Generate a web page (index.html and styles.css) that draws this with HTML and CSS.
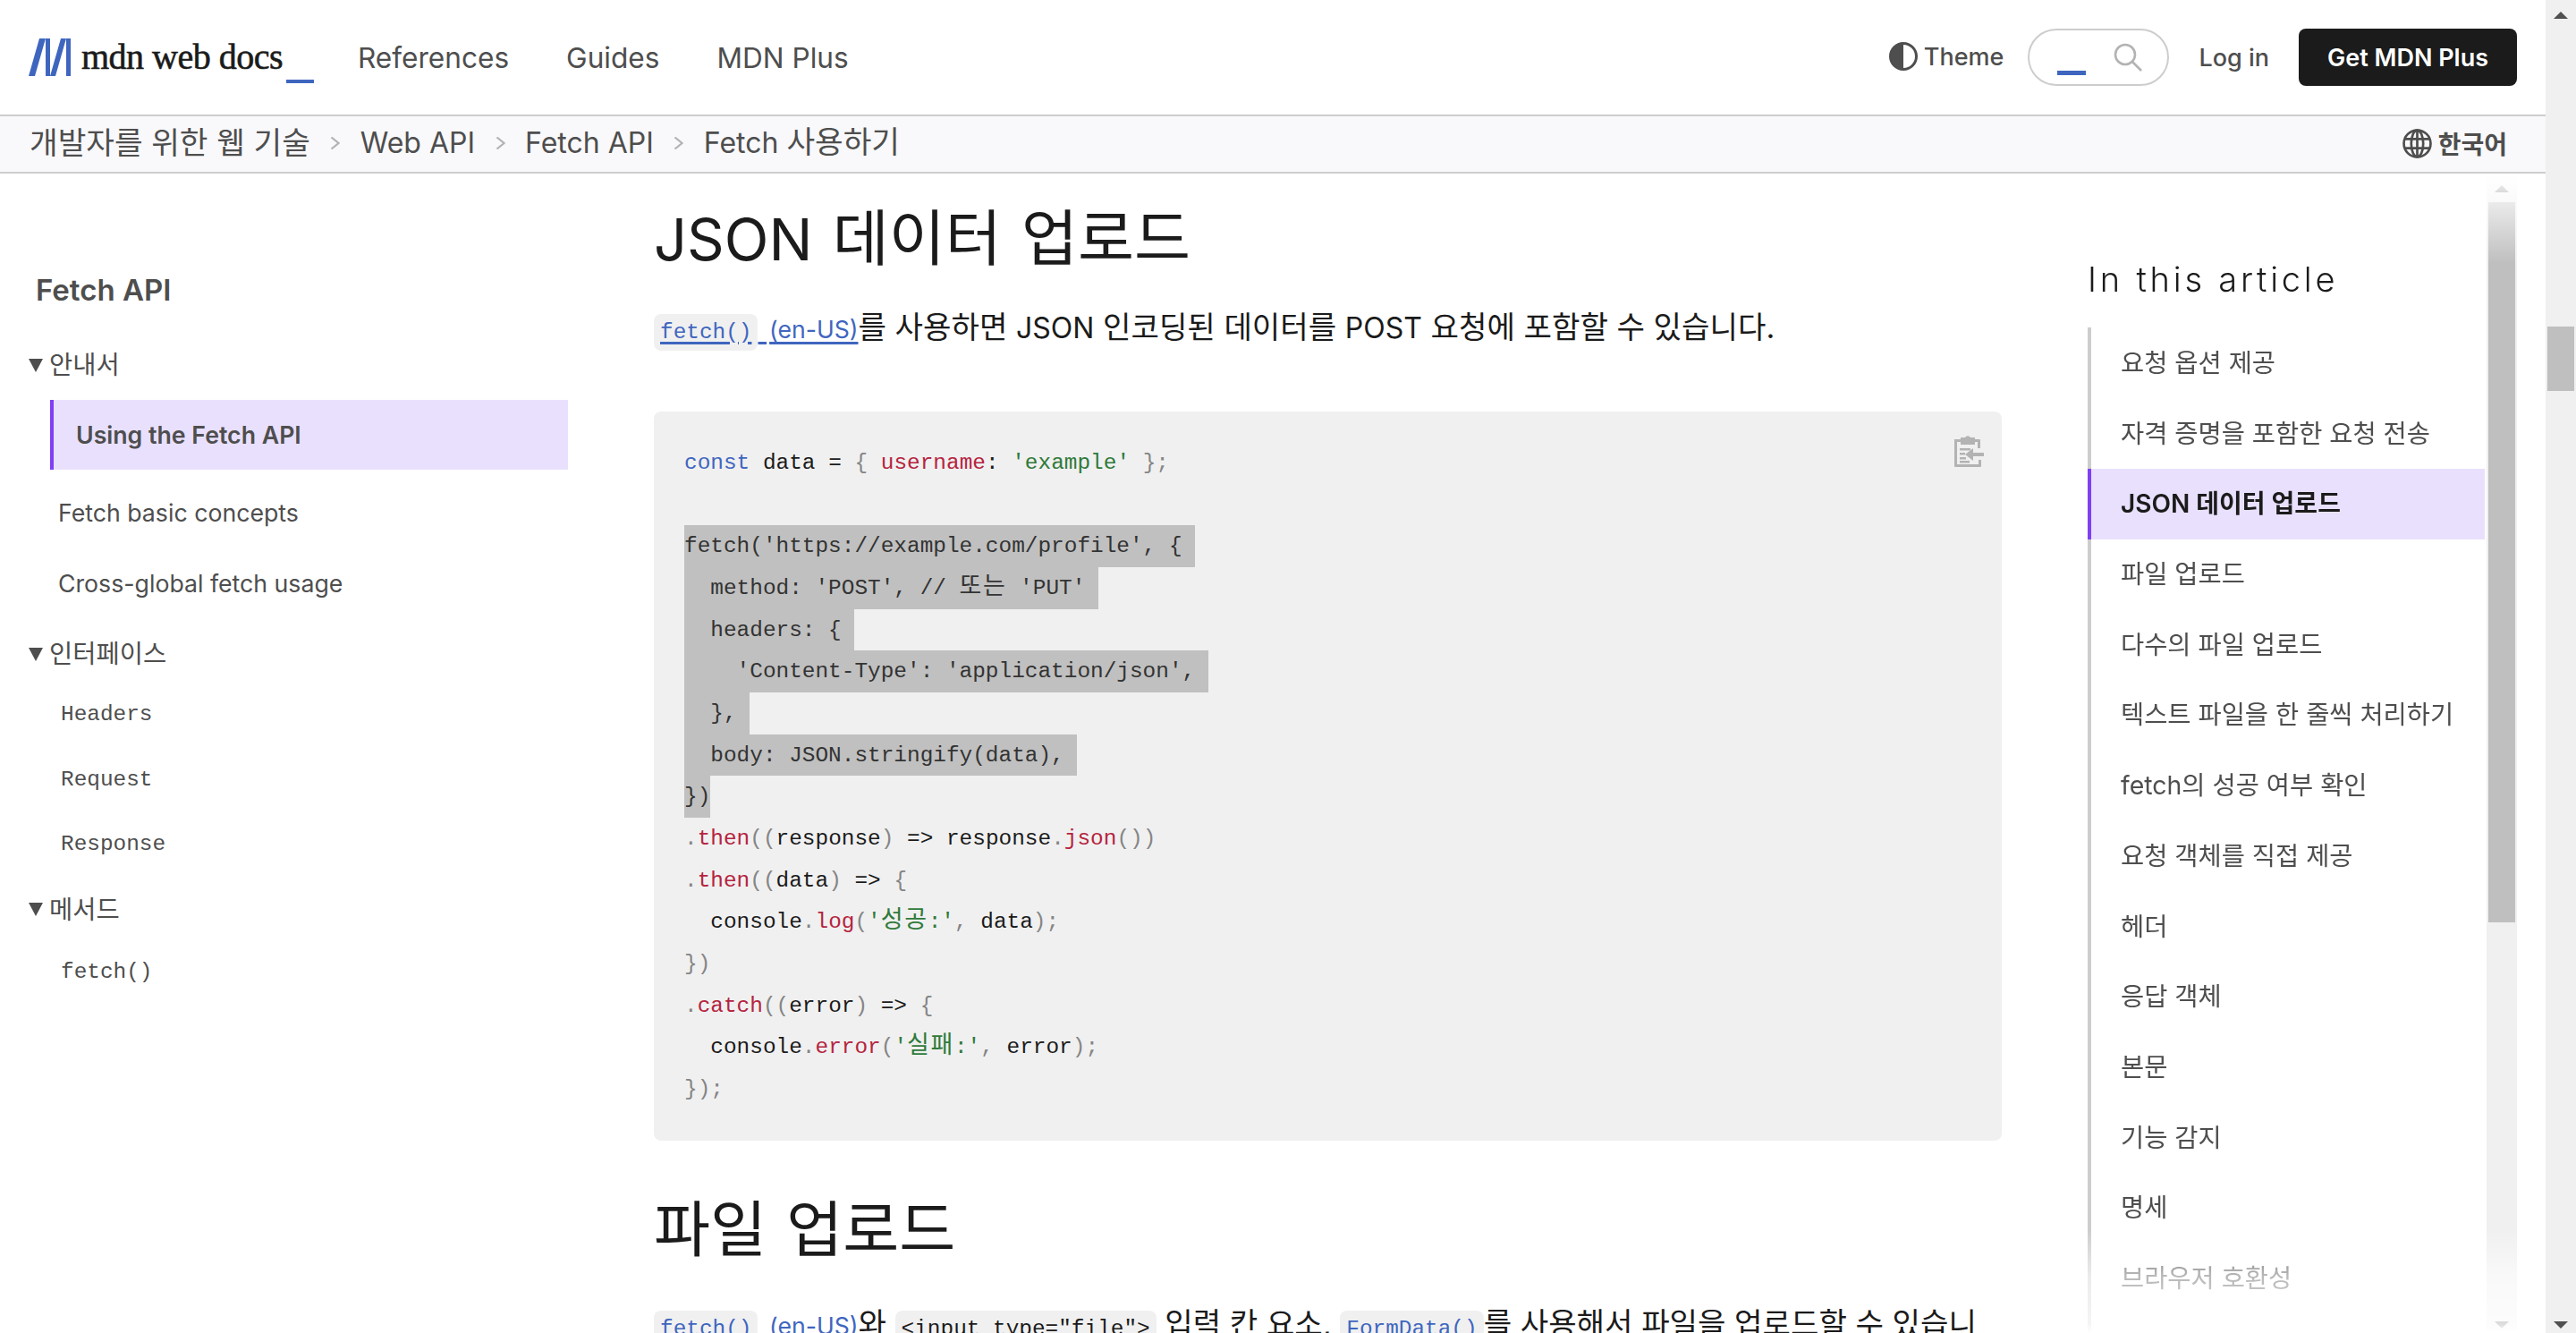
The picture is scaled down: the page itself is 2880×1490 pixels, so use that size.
FILE: index.html
```html
<!DOCTYPE html>
<html lang="ko">
<head>
<meta charset="utf-8">
<title>Fetch 사용하기 - Web API | MDN</title>
<link rel="stylesheet" href="styles.css">
</head>
<body>
<div class="page">
  <div class="viewport">
    <header class="top">
      <a class="logo">
        <svg class="logo-mark" viewBox="0 0 47 42"><path d="M0 42h7L19 0h-7zM19 0h5v42h-5zM24 42h6L42 0h-6zM42 0h5v42h-5z"/></svg>
        <span class="logo-text">mdn web docs</span>
        <span class="logo-bar"></span>
      </a>
      <nav class="mainnav">
        <a>References</a><a>Guides</a><a>MDN Plus</a>
      </nav>
      <div class="tools">
        <button class="theme">
          <svg class="theme-ico" viewBox="0 0 32 32"><circle cx="16" cy="16" r="14.5" fill="none" stroke="#4e4e4e" stroke-width="3"/><path d="M16 1.5a14.5 14.5 0 0 0 0 29z" fill="#4e4e4e"/></svg>
          <span>Theme</span>
        </button>
        <div class="search">
          <span class="caret"></span>
          <svg class="search-ico" viewBox="0 0 32 32"><circle cx="13" cy="13" r="11" fill="none" stroke="#b3b3b3" stroke-width="2.6"/><path d="M21 21l10 10" stroke="#b3b3b3" stroke-width="2.6" fill="none"/></svg>
        </div>
        <a class="login">Log in</a>
        <a class="plus">Get MDN Plus</a>
      </div>
    </header>
    <div class="crumbs">
      <ol class="crumb-list">
        <li class="ko-crumb">개발자를 위한 웹 기술</li>
        <li class="sep"><svg viewBox="0 0 11 14"><path d="M1.500 0.500l8 6.500-8 6.500" fill="none" stroke="#b3b3b3" stroke-width="2.200"/></svg></li>
        <li>Web API</li>
        <li class="sep"><svg viewBox="0 0 11 14"><path d="M1.500 0.500l8 6.500-8 6.500" fill="none" stroke="#b3b3b3" stroke-width="2.200"/></svg></li>
        <li>Fetch API</li>
        <li class="sep"><svg viewBox="0 0 11 14"><path d="M1.500 0.500l8 6.500-8 6.500" fill="none" stroke="#b3b3b3" stroke-width="2.200"/></svg></li>
        <li>Fetch <span class="ko-crumb">사용하기</span></li>
      </ol>
      <div class="lang">
        <svg class="globe" viewBox="0 0 32 32" fill="none" stroke="#4e4e4e" stroke-width="2.6"><circle cx="16" cy="16" r="14.5"/><ellipse cx="16" cy="16" rx="6.5" ry="14.5"/><path d="M2 11h28M2 21h28M16 1.5v29"/></svg>
        <span>한국어</span>
      </div>
    </div>
    <main class="layout">
      <aside class="side">
        <h4 class="side-title">Fetch API</h4>
        <div class="group first-group"><span class="tri"></span>안내서</div>
        <a class="side-active">Using the Fetch API</a>
        <a class="side-link">Fetch basic concepts</a>
        <a class="side-link">Cross-global fetch usage</a>
        <div class="group"><span class="tri"></span>인터페이스</div>
        <ul class="api-list">
          <li>Headers</li><li>Request</li><li>Response</li>
        </ul>
        <div class="group method-group"><span class="tri"></span>메서드</div>
        <ul class="api-list method-list">
          <li>fetch()</li>
        </ul>
      </aside>
      <article class="content">
        <h2 class="h-first"><span class="lat">JSON</span> 데이터 업로드</h2>
        <p class="para"><a class="lnk"><code class="chip">fetch()</code> <span class="en">(en-US)</span></a>를 사용하면 <span class="lat">JSON</span> 인코딩된 데이터를 <span class="lat">POST</span> 요청에 포함할 수 있습니다.</p>
        <div class="codebox">
          <svg class="copy" viewBox="0 0 36 37"><path d="M3 6h7V4h5a3.500 3.500 0 0 1 6 0h5v2h5a1 1 0 0 1 1 1v9h-3V9h-3v3H10V9H6v25h24v-5h3v7a1 1 0 0 1-1 1H4a1 1 0 0 1-1-1z" fill="#b3b3b3"/><path d="M9 16h12v2.500H9zM9 21h6v2.500H9zM9 26h7v2.500H9zM9 30h11v2.500H9z" fill="#b3b3b3"/><path d="M36 21v4H24v5l-9-7 9-7v5z" fill="#b3b3b3"/></svg>
          <code class="code">
            <span class="ln"><i class="kw">const</i> data <i class="pn">=</i> <i class="pg">{</i> <i class="pr">username</i>: <i class="st">'example'</i> <i class="pg">};</i></span>
            <span class="ln"> </span>
            <span class="ln sel">fetch('https://example.com/profile', { </span>
            <span class="ln sel">  method: 'POST', // <b class="ko">또는</b> 'PUT' </span>
            <span class="ln sel">  headers: { </span>
            <span class="ln sel">    'Content-Type': 'application/json', </span>
            <span class="ln sel">  }, </span>
            <span class="ln sel">  body: JSON.stringify(data), </span>
            <span class="ln sel">})</span>
            <span class="ln"><i class="pg">.</i><i class="pr">then</i><i class="pg">((</i>response<i class="pg">)</i> =&gt; response<i class="pg">.</i><i class="pr">json</i><i class="pg">())</i></span>
            <span class="ln"><i class="pg">.</i><i class="pr">then</i><i class="pg">((</i>data<i class="pg">)</i> =&gt; <i class="pg">{</i></span>
            <span class="ln">  console<i class="pg">.</i><i class="pr">log</i><i class="pg">(</i><i class="st">'<b class="ko">성공</b>:'</i><i class="pg">,</i> data<i class="pg">);</i></span>
            <span class="ln"><i class="pg">})</i></span>
            <span class="ln"><i class="pg">.</i><i class="pr">catch</i><i class="pg">((</i>error<i class="pg">)</i> =&gt; <i class="pg">{</i></span>
            <span class="ln">  console<i class="pg">.</i><i class="pr">error</i><i class="pg">(</i><i class="st">'<b class="ko">실패</b>:'</i><i class="pg">,</i> error<i class="pg">);</i></span>
            <span class="ln"><i class="pg">});</i></span>
          </code>
        </div>
        <h2 class="h-second">파일 업로드</h2>
        <p class="para para-second"><a class="lnk"><code class="chip">fetch()</code> <span class="en">(en-US)</span></a>와 <code class="chip plain">&lt;input type="file"&gt;</code> 입력 칸 요소, <a class="lnk"><code class="chip">FormData()</code></a>를 사용해서 파일을 업로드할 수 있습니</p>
      </article>
      <aside class="toc">
        <div class="toc-body">
          <h2 class="toc-title">In this article</h2>
          <ul class="toc-list">
            <li>요청 옵션 제공</li>
            <li>자격 증명을 포함한 요청 전송</li>
            <li class="toc-active">JSON 데이터 업로드</li>
            <li>파일 업로드</li>
            <li>다수의 파일 업로드</li>
            <li>텍스트 파일을 한 줄씩 처리하기</li>
            <li>fetch의 성공 여부 확인</li>
            <li>요청 객체를 직접 제공</li>
            <li>헤더</li>
            <li>응답 객체</li>
            <li>본문</li>
            <li>기능 감지</li>
            <li>명세</li>
            <li>브라우저 호환성</li>
          </ul>
        </div>
        <div class="bar bar-toc">
          <span class="arrow up"></span>
          <span class="thumb"></span>
          <span class="arrow down"></span>
        </div>
      </aside>
    </main>
  </div>
  <div class="bar bar-page">
    <span class="arrow up"></span>
    <span class="thumb"></span>
    <span class="arrow down"></span>
  </div>
</div>
</body>
</html>
```
FILE: styles.css
```css
* { box-sizing: border-box; }
html, body { margin: 0; padding: 0; background: #fff; }
body {
  font-family: Inter, "Noto Sans CJK KR", sans-serif;
  color: #1b1b1b;
  width: 2880px;
  height: 1490px;
  overflow: hidden;
}
ul, ol { list-style: none; margin: 0; padding: 0; }
h2, h4, p { margin: 0; font-weight: 400; }
i, b { font-style: normal; font-weight: 400; }

.page { display: flex; height: 1490px; }
.viewport { width: 2846px; display: flex; flex-direction: column; height: 1490px; }

/* top bar */
.top {
  height: 130px;
  flex: none;
  border-bottom: 2px solid #cdcdcd;
  display: flex;
  align-items: center;
  padding: 0 32px;
}
.logo { display: flex; align-items: center; width: 319px; position: relative; height: 64px; }
.logo-mark { width: 47px; height: 42px; fill: #3f66bf; flex: none; }
.logo-text {
  font-family: "Liberation Serif", serif;
  font-size: 40px;
  letter-spacing: -0.5px;
  -webkit-text-stroke: 0.6px #1b1b1b;
  margin-left: 12px;
  white-space: nowrap;
  line-height: 40px;
}
.logo-bar { position: absolute; left: 288px; top: 57px; width: 31px; height: 4px; background: #3f66bf; }
.mainnav { display: flex; gap: 64px; margin-left: 49px; font-size: 31.600px; color: #4e4e4e; }
.tools { margin-left: auto; display: flex; align-items: center; height: 64px; }
.theme {
  display: flex; align-items: center; gap: 7px;
  background: none; border: 0; padding: 0; margin: 0;
  font: 500 27px Inter, sans-serif; color: #4e4e4e;
  position: relative; top: -1px;
}
.theme-ico { width: 32px; height: 32px; }
.search {
  width: 158px; height: 64px; margin-left: 27px;
  border: 2px solid #cdcdcd; border-radius: 32px;
  position: relative;
}
.caret { position: absolute; left: 31px; top: 45px; width: 32px; height: 5px; background: #3f66bf; }
.search-ico { position: absolute; left: 94px; top: 14px; width: 32px; height: 32px; }
.login { margin-left: 33px; font-size: 27px; font-weight: 500; color: #4e4e4e; }
.plus {
  margin-left: 33px; width: 244px; height: 64px; border-radius: 8px;
  background: #1b1b1b; color: #fff; font-size: 27px; font-weight: 600;
  display: flex; align-items: center; justify-content: center;
}

/* breadcrumbs */
.crumbs {
  height: 64px; flex: none;
  background: #f9f9fb;
  border-bottom: 2px solid #cdcdcd;
  display: flex; align-items: center;
  padding: 0 43px 2px 33px;
  color: #4e4e4e;
}
.crumb-list { display: flex; align-items: center; font-size: 32px; white-space: nowrap; line-height: 44px; }
.ko-crumb { font-size: 34.400px; line-height: 1; }
.sep { width: 11px; height: 14px; margin: 0 22.500px; display: flex; }
.sep svg { width: 11px; height: 14px; }
.lang { margin-left: auto; display: flex; align-items: center; gap: 7px; font-size: 28px; font-weight: 700; }
.globe { width: 33px; height: 33px; }

/* layout */
.layout { display: flex; flex: 1; min-height: 0; overflow: hidden; }

/* sidebar */
.side { width: 731px; flex: none; padding-top: 100px; color: #4e4e4e; font-size: 26.700px; }
.side-title { font-size: 33px; font-weight: 600; line-height: 60px; height: 60px; margin: 0 0 0 40px; }
.group { display: flex; align-items: center; height: 40px; line-height: 40px; padding-left: 32px; margin-top: 19px; font-size: 28.500px; }
.first-group { margin-top: 34px; }
.tri {
  width: 0; height: 0; margin-right: 7px;
  border-left: 8.500px solid transparent;
  border-right: 8.500px solid transparent;
  border-top: 15px solid #4e4e4e;
}
.side-active {
  display: block;
  width: 579px; height: 78px; line-height: 78px;
  margin: 19px 0 9px 56px;
  padding-left: 25px;
  background: #e9e0fd;
  border-left: 4px solid #7f3ff5;
  font-weight: 600;
}
.side-link { display: block; height: 79px; line-height: 79px; padding-left: 65px; }
.api-list { padding-left: 68px; margin-top: 12px; font-family: "Liberation Mono", monospace; font-size: 24.400px; }
.api-list li { height: 72.500px; line-height: 72.500px; }
.method-group { margin-top: 16px; }
.method-list { margin-top: 14px; }

/* article */
.content { width: 1507px; flex: none; }
h2 { font-size: 68.500px; line-height: 80px; word-spacing: 3px; }
.lat { font-size: 65px; }
.para .lat { font-size: 32px; }
.h-first { margin: 33px 0 0 0; }
.h-second { margin: 60px 0 0 0; }
.para { font-size: 34.200px; line-height: 48px; white-space: nowrap; margin-top: 34px; }
.para-second { margin-top: 41px; }
.lnk { color: #3f66bf; text-decoration: underline; text-underline-offset: 4px; }
.en { font-size: 26.600px; margin-left: 3px; }
.chip {
  font-family: "Liberation Mono", monospace;
  font-size: 24.400px;
  background: #f0f0f0;
  border-radius: 8px;
  padding: 7px 7px;
}
.plain { color: #1b1b1b; }
.codebox {
  position: relative;
  margin-top: 64px;
  height: 815px;
  background: #f0f0f0;
  border-radius: 8px;
  padding: 34px 34px;
}
.copy { position: absolute; right: 20px; top: 25px; width: 36px; height: 37px; }
.code {
  display: block;
  font-family: "Liberation Mono", "Noto Sans CJK KR", monospace;
  font-size: 24.420px;
  line-height: 46.670px;
  color: #1b1b1b;
}
.ln { display: block; width: fit-content; height: 46.670px; padding-top: 1px; white-space: pre; }
.sel { background: #c0c0c0; color: #333; }
.kw { color: #3f66bf; }
.pr { color: #b5243f; }
.st { color: #2f7a3a; }
.pg { color: #858585; }
.pn { color: #1b1b1b; }
.ko { font-family: "Noto Sans CJK KR", sans-serif; font-size: 27px; letter-spacing: 1.600px; line-height: 1; }

/* toc */
.toc {
  flex: 1; min-width: 0;
  margin-left: 96px;
  display: flex;
  padding-right: 32px;
  -webkit-mask-image: linear-gradient(to bottom, rgba(0,0,0,0) 0, #000 100px, #000 calc(100% - 115px), rgba(0,0,0,0.4) calc(100% - 64px), rgba(0,0,0,0.2) calc(100% - 10px), rgba(0,0,0,0) 100%);
  mask-image: linear-gradient(to bottom, rgba(0,0,0,0) 0, #000 100px, #000 calc(100% - 115px), rgba(0,0,0,0.4) calc(100% - 64px), rgba(0,0,0,0.2) calc(100% - 10px), rgba(0,0,0,0) 100%);
}
.toc-body { width: 446px; flex: none; padding-top: 94px; display: flex; flex-direction: column; }
.toc-title { font-size: 38px; font-weight: 300; line-height: 48px; letter-spacing: 3.800px; word-spacing: 0; white-space: nowrap; }
.toc-list { margin-top: 30px; border-left: 4px solid #cdcdcd; color: #4e4e4e; font-size: 28.450px; flex: 1; margin-right: 2px; padding-top: 1px; }
.toc-list li { height: 78.700px; line-height: 78.700px; padding-left: 33px; white-space: nowrap; }
.toc-list .toc-active {
  margin-left: -4px; padding-left: 33px;
  border-left: 4px solid #7f3ff5;
  background: #e9e0fd; color: #1b1b1b; font-weight: 600; font-size: 28px;
}

/* scrollbars */
.bar { width: 34px; flex: none; background: #f0f0f0; display: flex; flex-direction: column; align-items: center; position: relative; }
.thumb { width: 30px; background: #bfbfbf; display: block; }
.arrow { position: absolute; left: 9px; width: 0; height: 0; border-left: 8px solid transparent; border-right: 8px solid transparent; }
.arrow.up { border-bottom: 8px solid #505050; top: 13px; }
.arrow.down { border-top: 8px solid #505050; bottom: 5px; }
.bar-page .thumb { margin-top: 365px; height: 72px; }
.bar-toc .thumb { margin-top: 32px; height: 805px; }
```
